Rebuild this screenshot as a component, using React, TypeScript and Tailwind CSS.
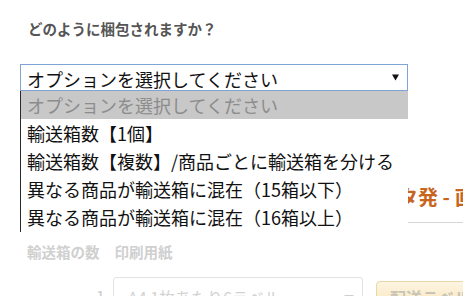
import React from "react";

const font = { fontFamily: '"Noto Sans CJK JP", "Noto Sans", sans-serif' };

export default function App() {
  const options = [
    "輸送箱数【1個】",
    "輸送箱数【複数】/商品ごとに輸送箱を分ける",
    "異なる商品が輸送箱に混在（15箱以下）",
    "異なる商品が輸送箱に混在（16箱以上）",
  ];
  return (
    <div
      className="relative w-[463px] h-[296px] overflow-hidden bg-white"
      style={font}
    >
      {/* Title */}
      <div className="h-[64px] pt-[20px] pl-[28px]">
        <div className="text-[14.5px] leading-[18px] font-bold text-[#555555]">
          どのように梱包されますか？
        </div>
      </div>

      {/* Select (focused) */}
      <div className="ml-[20px] w-[388px] h-[27px] border border-[#7fa3d6] bg-white flex items-center justify-between pl-[6px] pr-[8px]">
        <span className="text-[18px] leading-[20px] text-[#111111] pt-[2px]">
          オプションを選択してください
        </span>
        <svg width="7" height="7" viewBox="0 0 7 7">
          <path d="M0 0.5 H7 L3.5 6.5 Z" fill="#111111" />
        </svg>
      </div>

      {/* Underlying page content */}
      <div className="mt-[92px] pl-[398px] whitespace-nowrap text-[20px] leading-[28px] font-bold text-[#c7651c]">
        タ発 - 直送をリクエスト
      </div>
      <div className="mt-[11px] ml-[20px] h-px bg-[#d5d5d5]" />

      <div className="mt-[20px] pl-[27px] flex gap-[15px] text-[14.5px] leading-[18px] font-bold text-[#d0d0d0]">
        <span>輸送箱の数</span>
        <span>印刷用紙</span>
      </div>

      <div className="mt-[16px] flex items-start">
        <span className="shrink-0 ml-[96px] w-[17px] pt-[10px] text-[16px] leading-[18px] text-[#cccccc]">
          1
        </span>
        <div className="shrink-0 w-[250px] h-[30px] border border-[#e3e3e3] rounded-[3px] bg-white flex items-start justify-between pl-[14px] pr-[8px] pt-[9px]">
          <span className="text-[16px] leading-[20px] text-[#d2d2d2]">
            A4 1枚あたり6ラベル
          </span>
          <span className="text-[10px] leading-[20px] text-[#cfcfcf] pt-[2px]">
            ▼
          </span>
        </div>
        <div className="shrink-0 ml-[13px] mt-[4px] w-[120px] h-[26px] rounded-[4px] border border-[#ead7a6] bg-gradient-to-b from-[#fdf5e2] to-[#f9e6bb] pl-[13px] pt-[5px] whitespace-nowrap text-[16px] leading-[20px] font-bold text-[#c9c4b8]">
          配送ラベルを印刷
        </div>
      </div>

      {/* Open dropdown list */}
      <div className="absolute top-[91px] left-[20px] w-[388px] h-[141px] bg-white border-l border-[#2a2a2a]">
        <div className="h-[28px] bg-[#c8c8c8] flex items-center pl-[6px] text-[18px] leading-[20px] text-[#8c8c8c]">
          オプションを選択してください
        </div>
        {options.map((o) => (
          <div
            key={o}
            className="h-[28px] flex items-center pl-[6px] text-[18px] leading-[20px] text-[#111111] whitespace-nowrap"
          >
            {o}
          </div>
        ))}
      </div>
    </div>
  );
}
